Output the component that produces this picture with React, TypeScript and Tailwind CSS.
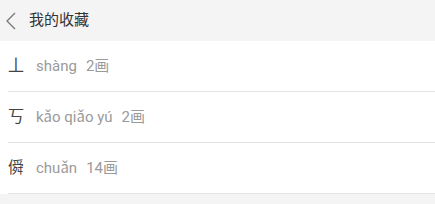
const items = [
  { char: "丄", pinyin: "shàng", strokes: "2画" },
  { char: "丂", pinyin: "kǎo qiǎo yú", strokes: "2画" },
  { char: "僢", pinyin: "chuǎn", strokes: "14画" },
];

export default function App() {
  return (
    <div
      className="w-[435px] h-[204px] bg-[#f4f4f4] overflow-hidden"
      style={{ fontFamily: 'Roboto, "Noto Sans CJK SC", sans-serif' }}
    >
      <div className="h-[41px] flex items-center">
        <svg width="12" height="18" viewBox="0 0 12 18" className="ml-[5px]" fill="none">
          <polyline points="10,1 2,9 10,17" stroke="#777" strokeWidth="1.3" />
        </svg>
        <span className="ml-[12px] text-[15px] text-[#333]">我的收藏</span>
      </div>
      <div className="bg-white">
        {items.map((item) => (
          <div key={item.char} className="pl-[8px]">
            <div className="h-[50px] flex items-center">
              <span className="w-[28px] text-[16px] text-[#444]">{item.char}</span>
              <span className="text-[15px] text-[#9a9a9a]">{item.pinyin}</span>
              <span className="ml-[9px] text-[15px] text-[#9a9a9a]">{item.strokes}</span>
            </div>
            <div className="h-px bg-[#e2e2e2]" />
          </div>
        ))}
      </div>
    </div>
  );
}
